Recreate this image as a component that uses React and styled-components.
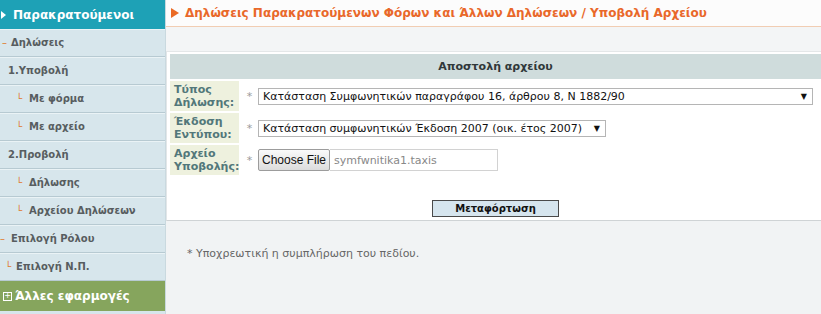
import styled, { createGlobalStyle } from "styled-components";

const GlobalStyle = createGlobalStyle`
    html, body {
        margin: 0;
        padding: 0;
        background: #ffffff;
        font-family: "DejaVu Sans", Verdana, sans-serif;
    }
`;

const Page = styled.div`
    display: grid;
    grid-template-columns: 166px 1fr;
    width: 821px;
    height: 314px;
    overflow: hidden;
`;

const Sidebar = styled.nav`
    display: flex;
    flex-direction: column;
    background: #d7e6ec;
    border-right: 1px solid #c9d9df;
`;

const SideHeader = styled.div`
    display: flex;
    align-items: center;
    gap: 7px;
    height: 29px;
    padding-left: 1px;
    background: #1ea1b6;
    color: #ffffff;
    font-size: 12px;
    font-weight: bold;
    box-sizing: border-box;
`;

const Arrow = styled.span`
    width: 0;
    height: 0;
    border-top: 4px solid transparent;
    border-bottom: 4px solid transparent;
    border-left: 5px solid #ffffff;
`;

const SideItem = styled.div`
    display: flex;
    align-items: center;
    height: 28px;
    padding-left: ${(p) => p.$indent}px;
    box-sizing: border-box;
    border-bottom: 1px solid #b7cad2;
    box-shadow: inset 0 1px 0 #eaf3f6;
    color: #575d60;
    font-size: 10px;
    font-weight: bold;
`;

const Marker = styled.span`
    color: #e07a2c;
    font-weight: normal;
    width: ${(p) => p.$w}px;
    font-size: 10px;
`;

const GreenItem = styled.div`
    display: flex;
    align-items: center;
    gap: 3px;
    height: 30px;
    padding-left: 3px;
    background: #86a55d;
    color: #ffffff;
    font-size: 12px;
    font-weight: bold;
    box-sizing: border-box;
`;

const PlusBox = styled.span`
    display: inline-flex;
    align-items: center;
    justify-content: center;
    width: 7px;
    height: 7px;
    border: 1px solid #ffffff;
    font-size: 8px;
    line-height: 1;
    font-weight: normal;
`;

const Main = styled.main`
    display: flex;
    flex-direction: column;
    background: #f1f3f4;
`;

const TitleBar = styled.div`
    display: flex;
    align-items: center;
    gap: 6px;
    height: 26px;
    padding-left: 5px;
    background: #fcfcfc;
    border-bottom: 1px solid #f1cdb3;
    color: #e9682a;
    font-size: 12px;
    font-weight: bold;
`;

const TitleArrow = styled.span`
    width: 0;
    height: 0;
    border-top: 5px solid transparent;
    border-bottom: 5px solid transparent;
    border-left: 8px solid #ea6a25;
`;

const Band = styled.div`
    height: 24px;
    background: #f3f5f6;
    border-bottom: 1px solid #e4e7e8;
`;

const Panel = styled.section`
    display: flex;
    flex-direction: column;
    background: #ffffff;
    padding: 2px 0 0 3px;
    border-bottom: 1px solid #cfd3d5;
    border-left: 1px solid #e2e6e8;
`;

const PanelHeader = styled.div`
    display: flex;
    align-items: center;
    justify-content: center;
    height: 25px;
    background: #cfdcdc;
    color: #30383a;
    font-size: 11px;
    font-weight: bold;
`;

const Form = styled.div`
    display: flex;
    flex-direction: column;
    gap: 2px;
    margin-top: 2px;
`;

const Row = styled.div`
    display: grid;
    grid-template-columns: 69px 19px 1fr;
    height: 30px;
`;

const Label = styled.div`
    display: flex;
    align-items: center;
    padding-left: 4px;
    background: #eef1de;
    color: #52777a;
    font-size: 11px;
    font-weight: bold;
    line-height: 13px;
`;

const Star = styled.div`
    display: flex;
    align-items: center;
    justify-content: center;
    padding-left: 2px;
    color: #9a9a9a;
    font-size: 11px;
`;

const Field = styled.div`
    display: flex;
    align-items: center;
`;

const SelectBox = styled.div`
    display: flex;
    align-items: center;
    justify-content: space-between;
    width: ${(p) => p.$width}px;
    height: 17px;
    padding: 0 5px 0 4px;
    box-sizing: border-box;
    border: 1px solid #b5b5b5;
    background: #ffffff;
    color: #111;
    font-size: 11px;
`;

const Caret = styled.span`
    font-size: 8px;
    color: #111;
`;

const FileButton = styled.button`
    height: 22px;
    width: 72px;
    padding: 0;
    border: 1px solid #9c9c9c;
    border-radius: 2px;
    background: linear-gradient(#fafafa, #dcdcdc);
    color: #111;
    font-family: "Liberation Sans", Arial, sans-serif;
    font-size: 12px;
`;

const FileName = styled.div`
    display: flex;
    align-items: center;
    width: 168px;
    height: 22px;
    padding-left: 4px;
    box-sizing: border-box;
    border: 1px solid #d2d2d2;
    border-left: none;
    color: #888;
    font-size: 11px;
`;

const Actions = styled.div`
    display: flex;
    justify-content: center;
    padding: 25px 0 3px;
`;

const UploadButton = styled.button`
    width: 127px;
    height: 17px;
    padding: 0;
    border: 1px solid #4a4a4a;
    background: #d6e5ee;
    color: #111;
    font-family: "DejaVu Sans", Verdana, sans-serif;
    font-size: 10px;
    font-weight: bold;
`;

const Note = styled.p`
    margin: 26px 0 0 21px;
    color: #666;
    font-size: 11px;
`;

const menu = [
    { text: "Δηλώσεις", indent: 2, mark: "–", w: 9 },
    { text: "1.Υποβολή", indent: 8 },
    { text: "Με φόρμα", indent: 16, mark: "└", w: 13 },
    { text: "Με αρχείο", indent: 16, mark: "└", w: 13 },
    { text: "2.Προβολή", indent: 8 },
    { text: "Δήλωσης", indent: 16, mark: "└", w: 13 },
    { text: "Αρχείου Δηλώσεων", indent: 16, mark: "└", w: 13 },
    { text: "Επιλογή Ρόλου", indent: 0, mark: "–", w: 11 },
    { text: "Επιλογή Ν.Π.", indent: 5, mark: "└", w: 11 },
];

export default function App() {
    return (
        <Page>
            <GlobalStyle />
            <Sidebar>
                <SideHeader>
                    <Arrow />
                    Παρακρατούμενοι
                </SideHeader>
                {menu.map((m) => (
                    <SideItem key={m.text} $indent={m.indent}>
                        {m.mark && <Marker $w={m.w}>{m.mark}</Marker>}
                        {m.text}
                    </SideItem>
                ))}
                <GreenItem>
                    <PlusBox>+</PlusBox>
                    Άλλες εφαρμογές
                </GreenItem>
            </Sidebar>
            <Main>
                <TitleBar>
                    <TitleArrow />
                    Δηλώσεις Παρακρατούμενων Φόρων και Άλλων Δηλώσεων / Υποβολή Αρχείου
                </TitleBar>
                <Band />
                <Panel>
                    <PanelHeader>Αποστολή αρχείου</PanelHeader>
                    <Form>
                        <Row>
                            <Label>Τύπος<br />Δήλωσης:</Label>
                            <Star>*</Star>
                            <Field>
                                <SelectBox $width={555}>
                                    Κατάσταση Συμφωνητικών παραγράφου 16, άρθρου 8, Ν 1882/90
                                    <Caret>▼</Caret>
                                </SelectBox>
                            </Field>
                        </Row>
                        <Row>
                            <Label>Έκδοση<br />Εντύπου:</Label>
                            <Star>*</Star>
                            <Field>
                                <SelectBox $width={348}>
                                    Κατάσταση συμφωνητικών Έκδοση 2007 (οικ. έτος 2007)
                                    <Caret>▼</Caret>
                                </SelectBox>
                            </Field>
                        </Row>
                        <Row>
                            <Label>Αρχείο<br />Υποβολής:</Label>
                            <Star>*</Star>
                            <Field>
                                <FileButton>Choose File</FileButton>
                                <FileName>symfwnitika1.taxis</FileName>
                            </Field>
                        </Row>
                    </Form>
                    <Actions>
                        <UploadButton>Μεταφόρτωση</UploadButton>
                    </Actions>
                </Panel>
                <Note>* Υποχρεωτική η συμπλήρωση του πεδίου.</Note>
            </Main>
        </Page>
    );
}
